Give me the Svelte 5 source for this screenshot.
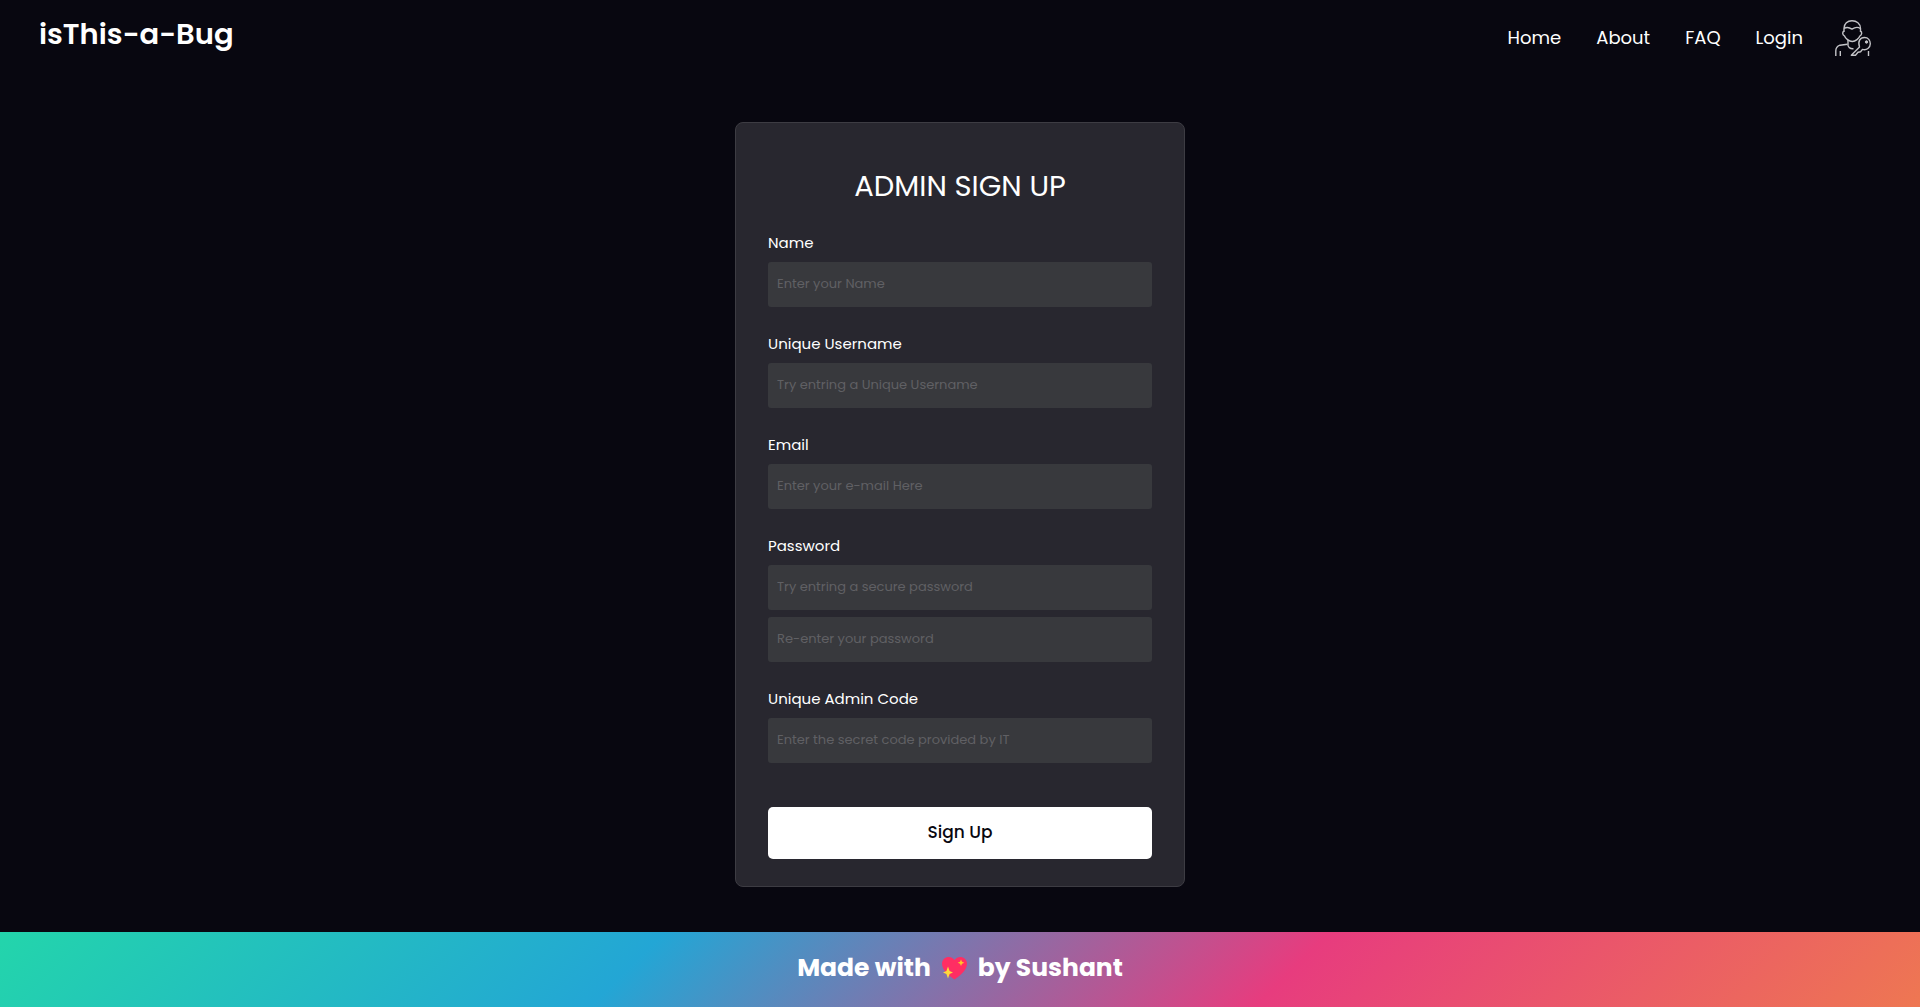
<script>
  const links = ['Home', 'About', 'FAQ', 'Login'];

  const fields = [
    { id: 'name', label: 'Name', inputs: [{ type: 'text', hint: 'Enter your Name' }] },
    { id: 'username', label: 'Unique Username', inputs: [{ type: 'text', hint: 'Try entring a Unique Username' }] },
    { id: 'email', label: 'Email', inputs: [{ type: 'email', hint: 'Enter your e-mail Here' }] },
    {
      id: 'password',
      label: 'Password',
      inputs: [
        { type: 'password', hint: 'Try entring a secure password' },
        { type: 'password', hint: 'Re-enter your password' }
      ]
    },
    { id: 'code', label: 'Unique Admin Code', inputs: [{ type: 'text', hint: 'Enter the secret code provided by IT' }] }
  ];
</script>

<div class="page">
  <header>
    <a class="brand" href="#home">isThis-a-Bug</a>
    <nav>
      <ul>
        {#each links as link}
          <li><a href={'#' + link.toLowerCase()}>{link}</a></li>
        {/each}
      </ul>
      <a class="admin" href="#admin" aria-label="Admin">
        <svg viewBox="0 0 36 36" fill="none" stroke="currentColor" stroke-width="1.4" stroke-linejoin="round">
          <path d="M9 12V8.500C9 3.500 12.500.8 17 .8S25.500 3.500 25.500 8.500V12" />
          <path d="M9.200 8.500c2.300-1.700 4.600-1.500 7.800.6 3.200-2.100 6-2.300 8.300-.6" />
          <path d="M9 11.300c-2 .4-1.600 3.700.4 4.500C10.500 18.500 14 21.500 17.300 21.500s6.500-3 7.700-5.700c2-.8 2.300-4.100.5-4.500" />
          <path d="M13 20v4.500c-.6 2.500 2.200 4.500 5.500 4.200" />
          <path d="M12.500 24.200 5 25.200C2 26.200.8 28.200.8 31v5M5.300 31v5M33.500 31v5" />
          <path d="M16.300 35.200 24.500 27C22.600 21.500 25 17.500 29.500 17.500c3.700 0 5.800 3 5.800 6.300 0 4-3.800 6.800-7.800 5.600l-1.900 2.300-2.600.6-2.500 2.900Z" />
          <circle cx="31.500" cy="22" r="1.200" fill="currentColor" stroke-width="1" />
        </svg>
      </a>
    </nav>
  </header>

  <main>
    <form class="card" onsubmit={(e) => e.preventDefault()}>
      <h1>ADMIN SIGN UP</h1>
      <div class="fields">
        {#each fields as field}
          <div class="field">
            <label for={field.id}>{field.label}</label>
            {#each field.inputs as input, i}
              <input
                id={i === 0 ? field.id : field.id + '-repeat'}
                type={input.type}
                placeholder={input.hint}
                aria-label={i === 0 ? undefined : input.hint}
              />
            {/each}
          </div>
        {/each}
      </div>
      <button type="submit">Sign Up</button>
    </form>
  </main>

  <footer>
    <span>Made with</span>
    <svg viewBox="0 0 27 24" role="img" aria-label="love">
      <path fill="#ff2e63" d="M13.500 23.500C8.500 20 1 14.500 1 7.500 1 1.200 9.500-1.800 13.500 4 17.500-1.800 26 1.200 26 7.500c0 7-7.500 12.500-12.500 16Z" />
      <path fill="#ffd83b" d="M7 10.500 8.600 14.900 12 16.500 8.600 18.100 7 22.500 5.400 18.100 2 16.500 5.400 14.900Z" />
      <path fill="#ffc629" d="M20 3.500l1 2.200 2.300 1-2.300 1-1 2.300-1-2.300-2.300-1 2.300-1Z" />
    </svg>
    <span>by Sushant</span>
  </footer>
</div>

<style>
  :global(body) {
    margin: 0;
    background: #080710;
  }

  .page {
    display: flex;
    flex-direction: column;
    min-height: 100vh;
    color: #fff;
    font-family: Poppins, Inter, sans-serif;
  }

  .page * {
    box-sizing: border-box;
  }

  header {
    display: flex;
    justify-content: space-between;
    align-items: flex-start;
    padding: 12px 49px 0 39px;
  }

  a {
    color: inherit;
    text-decoration: none;
  }

  .brand {
    font-size: 29px;
    font-weight: 600;
    line-height: 44px;
  }

  nav {
    display: flex;
    align-items: center;
    gap: 32px;
    height: 52px;
    font-size: 18px;
  }

  ul {
    display: flex;
    gap: 35px;
    margin: 0;
    padding: 0 0 2px;
    list-style: none;
  }

  .admin {
    display: flex;
    color: #c4c4c8;
  }

  .admin svg {
    width: 36px;
    height: 36px;
  }

  main {
    flex: 1;
    display: flex;
    justify-content: center;
    align-items: flex-start;
    padding: 58px 20px 45px;
  }

  .card {
    display: flex;
    flex-direction: column;
    width: 100%;
    max-width: 450px;
    padding: 41px 32px 27px;
    background: #28272f;
    border: 1px solid #3d3c43;
    border-radius: 8px;
  }

  h1 {
    margin: 0 0 22px;
    font-size: 29px;
    font-weight: 400;
    line-height: 45px;
    text-align: center;
  }

  .fields {
    display: flex;
    flex-direction: column;
    gap: 25px;
    margin-bottom: 44px;
  }

  .field {
    display: flex;
    flex-direction: column;
    gap: 7px;
  }

  label {
    font-size: 15px;
    font-weight: 400;
    line-height: 24px;
  }

  input {
    width: 100%;
    height: 45px;
    padding: 0 9px 2px;
    border: 0;
    border-radius: 3px;
    background: #38393d;
    color: #fff;
    font-family: inherit;
    font-size: 13px;
    font-weight: 400;
  }

  input::placeholder {
    color: #606064;
    opacity: 1;
  }

  button {
    height: 52px;
    padding-bottom: 3px;
    border: 0;
    border-radius: 5px;
    background: #fff;
    color: #080710;
    font-family: inherit;
    font-size: 17px;
    font-weight: 500;
    cursor: pointer;
  }

  footer {
    display: flex;
    justify-content: center;
    align-items: center;
    gap: 10px;
    height: 75px;
    padding-bottom: 4px;
    background: linear-gradient(-45deg, #ee7752, #e73c7e, #23a6d5, #23d5ab);
    font-size: 25px;
    font-weight: 700;
  }

  footer svg {
    width: 27px;
    height: 24px;
  }
</style>
